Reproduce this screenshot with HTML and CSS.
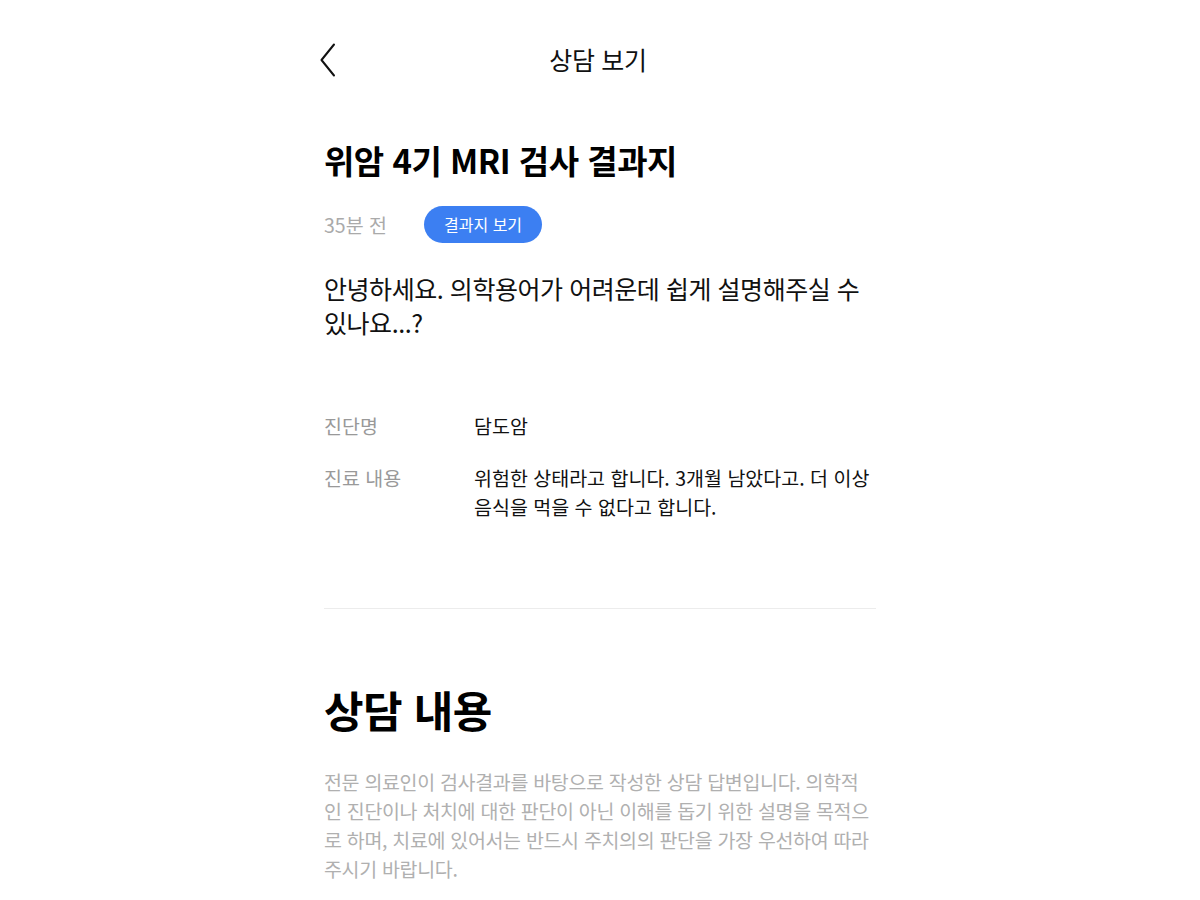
FILE: index.html
```html
<!DOCTYPE html>
<html lang="ko">
<head>
<meta charset="utf-8">
<title>상담 보기</title>
<link rel="stylesheet" href="styles.css">
</head>
<body>
<div class="page">
  <header class="topbar">
    <button class="back" aria-label="뒤로">
      <svg width="16" height="34" viewBox="0 0 16 34"><path d="M14 1.5 L1.5 17 L14 32.5" fill="none" stroke="#111" stroke-width="2" stroke-linecap="round" stroke-linejoin="round"/></svg>
    </button>
    <h1 class="topbar-title">상담 보기</h1>
  </header>

  <section class="question">
    <h2 class="q-title">위암 4기 MRI 검사 결과지</h2>
    <div class="meta">
      <span class="time">35분 전</span>
      <button class="pill">결과지 보기</button>
    </div>
    <p class="q-body">안녕하세요. 의학용어가 어려운데 쉽게 설명해주실 수 있나요...?</p>

    <dl class="info">
      <div class="info-row">
        <dt>진단명</dt>
        <dd>담도암</dd>
      </div>
      <div class="info-row">
        <dt>진료 내용</dt>
        <dd>위험한 상태라고 합니다. 3개월 남았다고. 더 이상 음식을 먹을 수 없다고 합니다.</dd>
      </div>
    </dl>
  </section>

  <hr class="divider">

  <section class="answer">
    <h2 class="a-title">상담 내용</h2>
    <p class="notice">전문 의료인이 검사결과를 바탕으로 작성한 상담 답변입니다. 의학적<br>인 진단이나 처치에 대한 판단이 아닌 이해를 돕기 위한 설명을 목적으로 하며, 치료에 있어서는 반드시 주치의의 판단을 가장 우선하여 따라주시기 바랍니다.</p>
  </section>
</div>
</body>
</html>
```

FILE: styles.css
```css
* { box-sizing: border-box; }
html, body { margin: 0; padding: 0; background: #fff; }
body {
  font-family: "Noto Sans CJK KR", "Noto Sans", sans-serif;
  color: #111;
}
.page {
  width: 600px;
  margin: 0 auto;
  padding: 0 24px;
}
.topbar {
  height: 120px;
  display: flex;
  align-items: flex-start;
  justify-content: center;
  position: relative;
  padding-top: 42px;
}
.back {
  position: absolute;
  left: -4px;
  top: 42px;
  border: 0;
  background: none;
  padding: 0;
  width: 20px;
  height: 36px;
  display: flex;
  align-items: center;
}
.topbar-title {
  margin: 0 4px 0 0;
  font-size: 25px;
  font-weight: 400;
  line-height: 34px;
  letter-spacing: -0.3px;
}
.q-title {
  margin: 18px 0 0;
  font-size: 33px;
  font-weight: 700;
  line-height: 44px;
  letter-spacing: -0.5px;
  color: #000;
}
.meta {
  display: flex;
  align-items: center;
  gap: 37px;
  margin-top: 24px;
}
.time {
  color: #aaa;
  font-size: 19.5px;
  line-height: 26px;
}
.pill {
  border: 0;
  background: #3c7ff2;
  color: #fff;
  font-family: inherit;
  font-size: 16px;
  height: 37px;
  padding: 0 20px;
  border-radius: 19px;
  line-height: 37px;
}
.q-body {
  margin: 28px 0 0;
  font-size: 25px;
  line-height: 34px;
  letter-spacing: -0.45px;
}
.info {
  margin: 72px 0 0;
  display: flex;
  flex-direction: column;
  gap: 23px;
}
.info-row {
  display: flex;
}
.info dt {
  width: 150px;
  flex: none;
  color: #999;
  font-size: 19.5px;
  line-height: 29px;
}
.info dd {
  margin: 0;
  flex: 1;
  font-size: 19.5px;
  line-height: 29px;
}
.divider {
  margin: 87px 0 0;
  border: 0;
  height: 1px;
  background: #ececec;
}
.a-title {
  margin: 72px 0 0;
  font-size: 43px;
  font-weight: 700;
  line-height: 56px;
  letter-spacing: -0.5px;
  color: #000;
}
.notice {
  margin: 30px 0 0;
  color: #b0b0b0;
  font-size: 19.5px;
  line-height: 29px;
  letter-spacing: -0.32px;
}
```
